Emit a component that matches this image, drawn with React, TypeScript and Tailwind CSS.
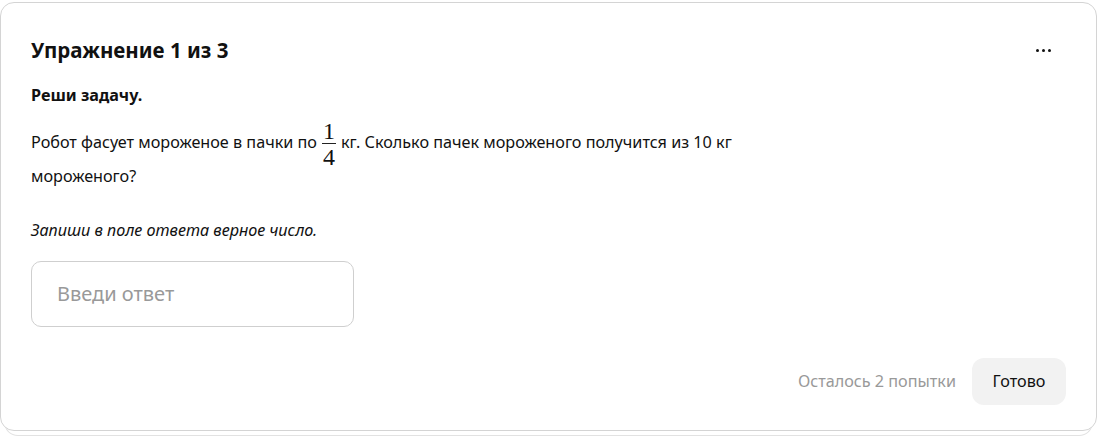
import React from "react";

function Fraction({ top, bottom }: { top: string; bottom: string }) {
  return (
    <span className="mx-[5px] -my-[8px] inline-flex flex-col items-center align-middle font-['Liberation_Serif',serif] text-[24px] leading-[22px]">
      <span className="px-[1px]">{top}</span>
      <span className="mt-[1px] mb-[2px] h-px w-full bg-[#222]" />
      <span className="px-[1px]">{bottom}</span>
    </span>
  );
}

export default function App() {
  return (
    <div className="min-h-[437px] bg-white font-['Noto_Sans',sans-serif] text-[#111]">
      <div className="relative pr-[1px] pt-[2px]">
        {/* stacked card behind */}
        <div className="absolute bottom-[-5px] left-[4px] right-[5px] h-[20px] rounded-b-[14px] border border-t-0 border-[#e2e2e2]" />
        <div className="relative flex h-[429px] flex-col rounded-[14px] border border-[#d4d4d4] bg-white px-[30px] pt-[33px] pb-[25px]">
          <div className="flex items-center justify-between">
            <h1 className="text-[20.5px] font-bold leading-[28px]">Упражнение 1 из 3</h1>
            <button className="mr-[15px] flex h-[20px] items-center gap-[3px]">
              <span className="h-[3px] w-[3px] rounded-full bg-[#111]" />
              <span className="h-[3px] w-[3px] rounded-full bg-[#111]" />
              <span className="h-[3px] w-[3px] rounded-full bg-[#111]" />
            </button>
          </div>

          <p className="mt-[20px] text-[16.2px] font-bold leading-[22px]">Реши задачу.</p>

          <p className="mt-[20px] max-w-[720px] text-[16.2px] leading-[33px]">
            Робот фасует мороженое в пачки по
            <Fraction top="1" bottom="4" />
            кг. Сколько пачек мороженого получится из 10 кг мороженого?
          </p>

          <p className="mt-[26px] text-[16.2px] italic leading-[22px]">Запиши в поле ответа верное число.</p>

          <div className="mt-[20px] flex h-[66px] w-[323px] items-center rounded-[10px] border border-[#cfcfcf] px-[25px]">
            <input
              className="w-full bg-transparent text-[20px] text-[#111] outline-none placeholder:text-[#999]"
              placeholder="Введи ответ"
            />
          </div>

          <div className="mt-auto flex items-center justify-end gap-[16px]">
            <span className="text-[16.2px] text-[#999]">Осталось 2 попытки</span>
            <button className="h-[47px] w-[94px] rounded-[12px] bg-[#f2f2f2] text-[16.2px] text-[#111]">
              Готово
            </button>
          </div>
        </div>
      </div>
    </div>
  );
}
